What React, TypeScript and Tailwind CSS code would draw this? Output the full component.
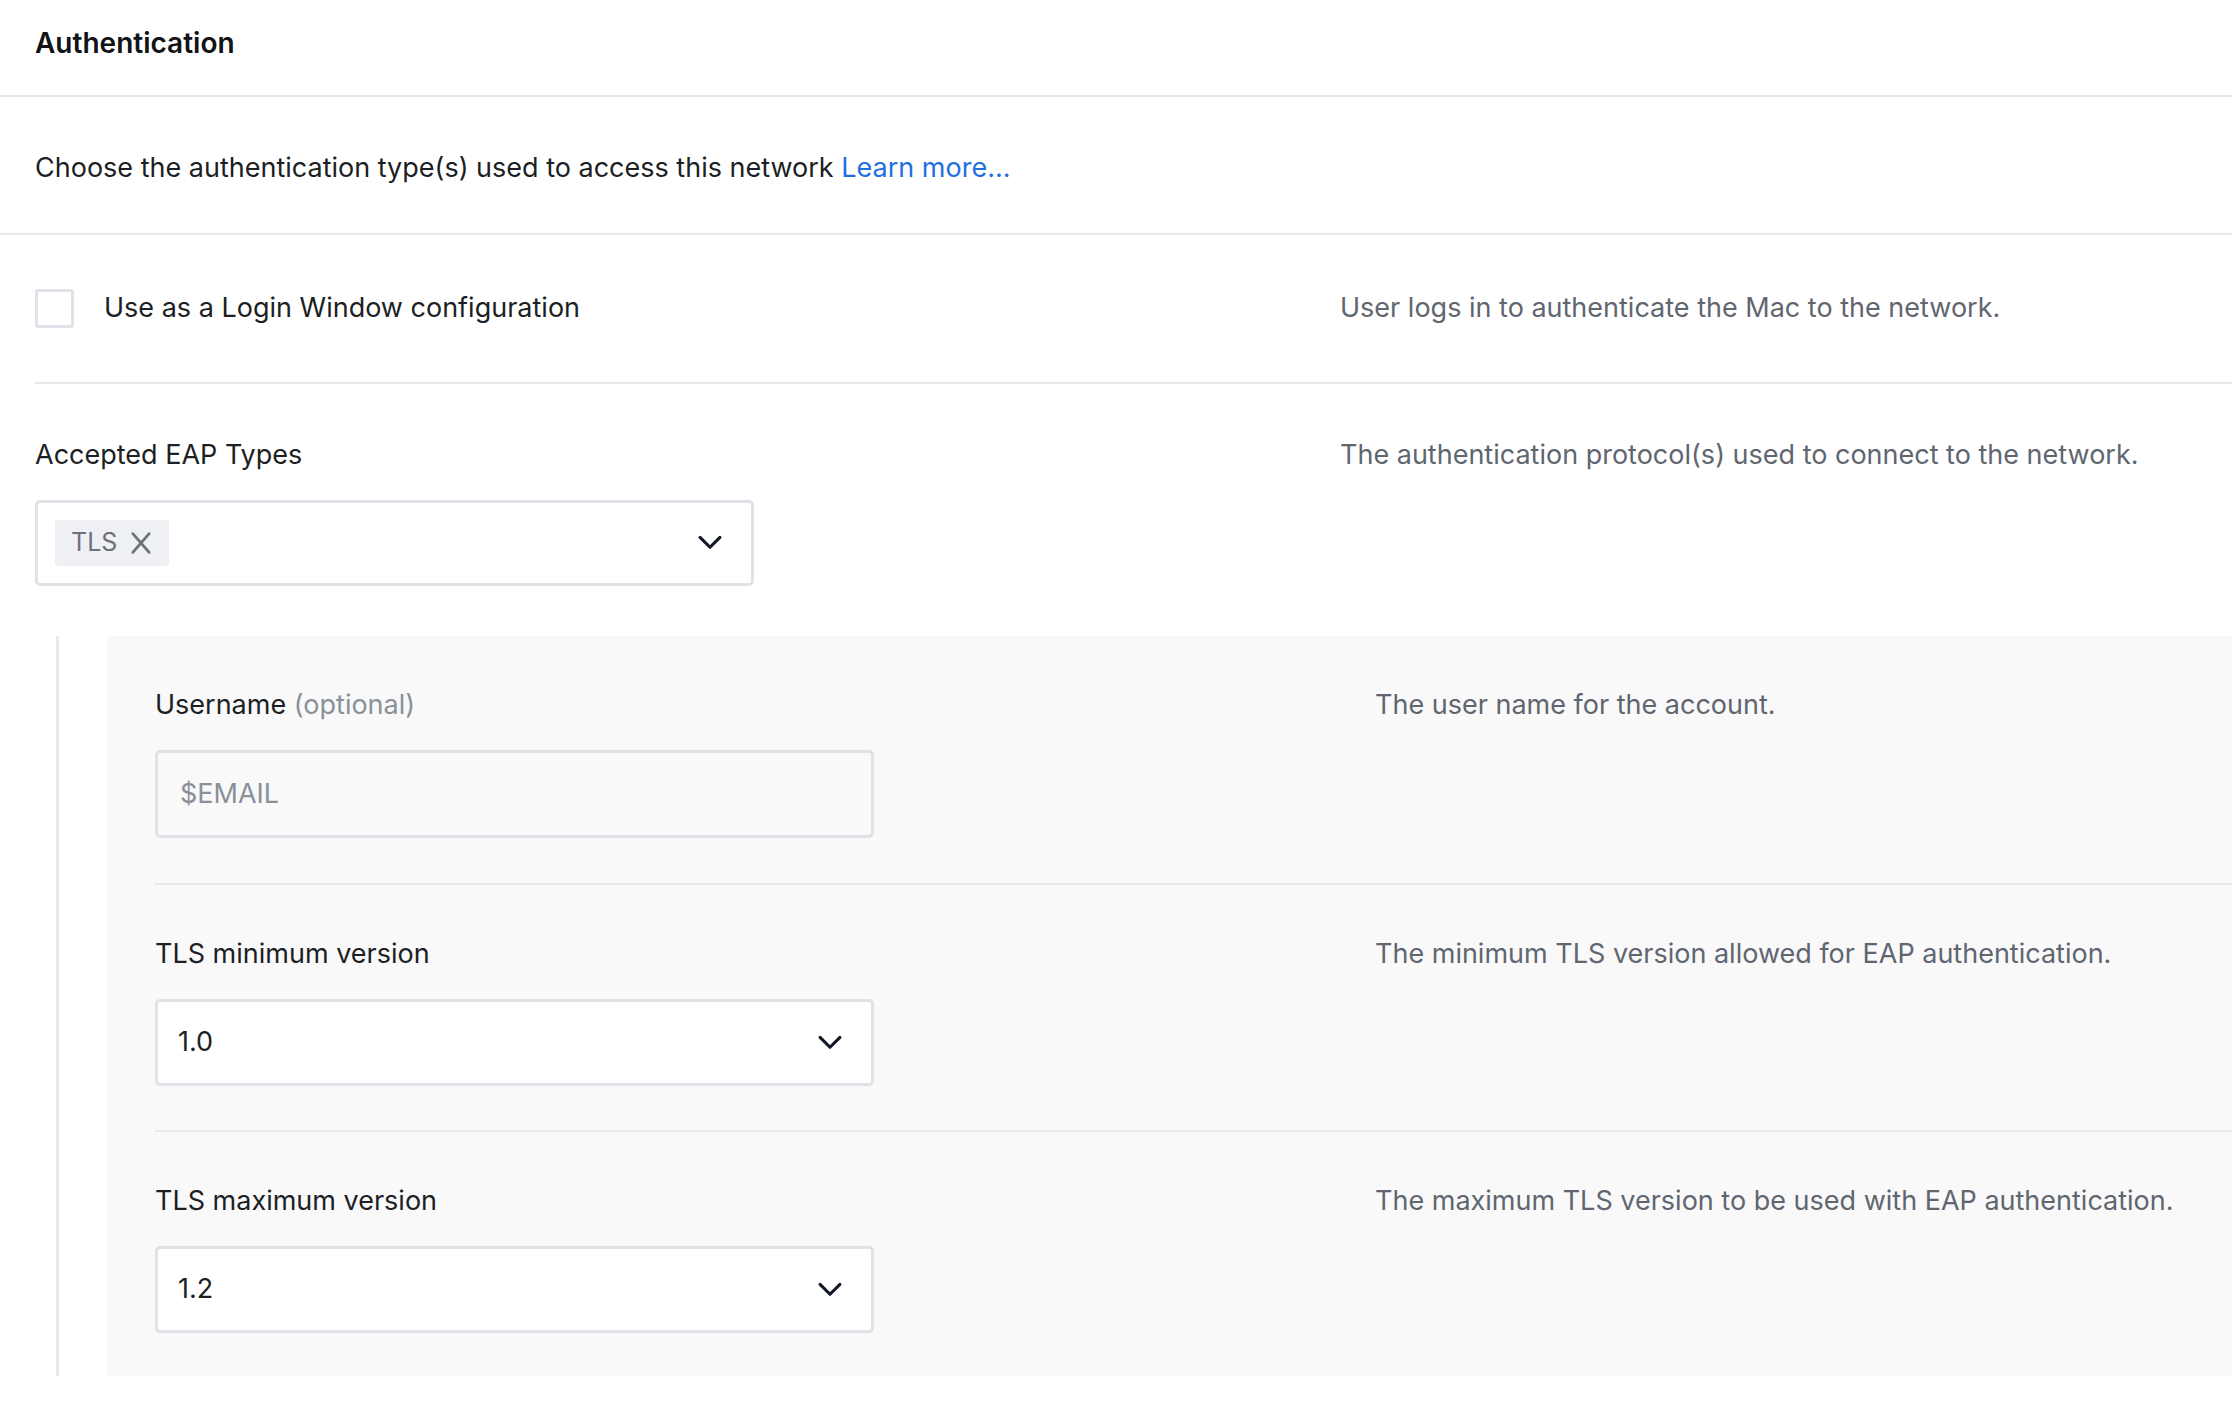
import React from 'react'

const font = { fontFamily: 'Inter, "Noto Sans", sans-serif' }

function Chevron() {
  return (
    <svg width="34" height="34" viewBox="0 0 24 24" fill="none" stroke="#111827" strokeWidth="2.2" strokeLinecap="round" strokeLinejoin="round">
      <path d="M5 8l7 7 7-7" />
    </svg>
  )
}

function Select({ value }: { value: string }) {
  return (
    <div className="flex items-center justify-between w-[719px] h-[87px] border-[3px] border-[#e0e2e7] rounded-[5px] bg-white pl-[20px] pr-[24px]">
      <span className="text-[27px] text-[#1c1f24]">{value}</span>
      <Chevron />
    </div>
  )
}

function Field({ label, hint, children }: { label: React.ReactNode; hint: string; children: React.ReactNode }) {
  return (
    <div className="grid grid-cols-[1220px_1fr]">
      <div className="flex flex-col gap-[28px]">
        <div className="text-[27px] text-[#1c1f24] leading-[34px]">{label}</div>
        {children}
      </div>
      <div className="text-[27px] text-[#5f6670] leading-[34px]">{hint}</div>
    </div>
  )
}

export default function App() {
  return (
    <div className="bg-white w-[2232px] min-h-[1414px] overflow-hidden" style={font}>
      <div className="h-[97px] flex items-center px-[35px] border-b-2 border-[#e8e9ec]">
        <h1 className="text-[28px] font-semibold text-[#111317] -mt-[10px]">Authentication</h1>
      </div>
      <div className="h-[138px] flex items-center px-[35px] pt-[6px] border-b-2 border-[#e8e9ec]">
        <p className="text-[27px] text-[#1c1f24]">
          Choose the authentication type(s) used to access this network{' '}
          <a className="text-[#1f6fe0]">Learn more...</a>
        </p>
      </div>
      <div className="ml-[35px] h-[149px] grid grid-cols-[1305px_1fr] items-center border-b-2 border-[#e8e9ec]">
        <label className="flex items-center gap-[30px]">
          <span className="w-[39px] h-[39px] border-[3px] border-[#e0e2e7] rounded-[3px] bg-white" />
          <span className="text-[27px] text-[#1c1f24]">Use as a Login Window configuration</span>
        </label>
        <span className="text-[27px] text-[#5f6670]">User logs in to authenticate the Mac to the network.</span>
      </div>
      <div className="ml-[35px] pt-[54px] grid grid-cols-[1305px_1fr]">
        <div className="flex flex-col gap-[28px]">
          <div className="text-[27px] text-[#1c1f24] leading-[34px]">Accepted EAP Types</div>
          <div className="flex items-center justify-between w-[719px] h-[86px] border-[3px] border-[#e0e2e7] rounded-[5px] bg-white pl-[17px] pr-[24px]">
            <span className="flex items-center gap-[10px] h-[46px] pl-[16px] pr-[14px] rounded-[3px] bg-[#eef0f3] text-[25px] text-[#6b717b]">
              TLS
              <svg width="28" height="28" viewBox="0 0 24 24" stroke="#6b717b" strokeWidth="2.4" strokeLinecap="round">
                <path d="M5 4l14 16M19 4L5 20" />
              </svg>
            </span>
            <Chevron />
          </div>
        </div>
        <span className="text-[27px] text-[#5f6670] leading-[34px]">The authentication protocol(s) used to connect to the network.</span>
      </div>
      <div className="mt-[50px] ml-[56px] flex">
        <div className="w-[3px] bg-[#e8e9ec]" />
        <div className="ml-[48px] flex-1 bg-[#f9f9fa] pl-[48px] pb-[43px]">
          <div className="pt-[52px] pb-[45px] border-b-2 border-[#e8e9ec]">
            <Field label={<>Username <span className="text-[#8a9099]">(optional)</span></>} hint="The user name for the account.">
              <div className="flex items-center w-[719px] h-[88px] border-[3px] border-[#e0e2e7] rounded-[5px] bg-[#f9f9fa] px-[22px] text-[27px] text-[#8a9099]">
                $EMAIL
              </div>
            </Field>
          </div>
          <div className="pt-[52px] pb-[44px] border-b-2 border-[#e8e9ec]">
            <Field label="TLS minimum version" hint="The minimum TLS version allowed for EAP authentication.">
              <Select value="1.0" />
            </Field>
          </div>
          <div className="pt-[52px]">
            <Field label="TLS maximum version" hint="The maximum TLS version to be used with EAP authentication.">
              <Select value="1.2" />
            </Field>
          </div>
        </div>
      </div>
    </div>
  )
}
